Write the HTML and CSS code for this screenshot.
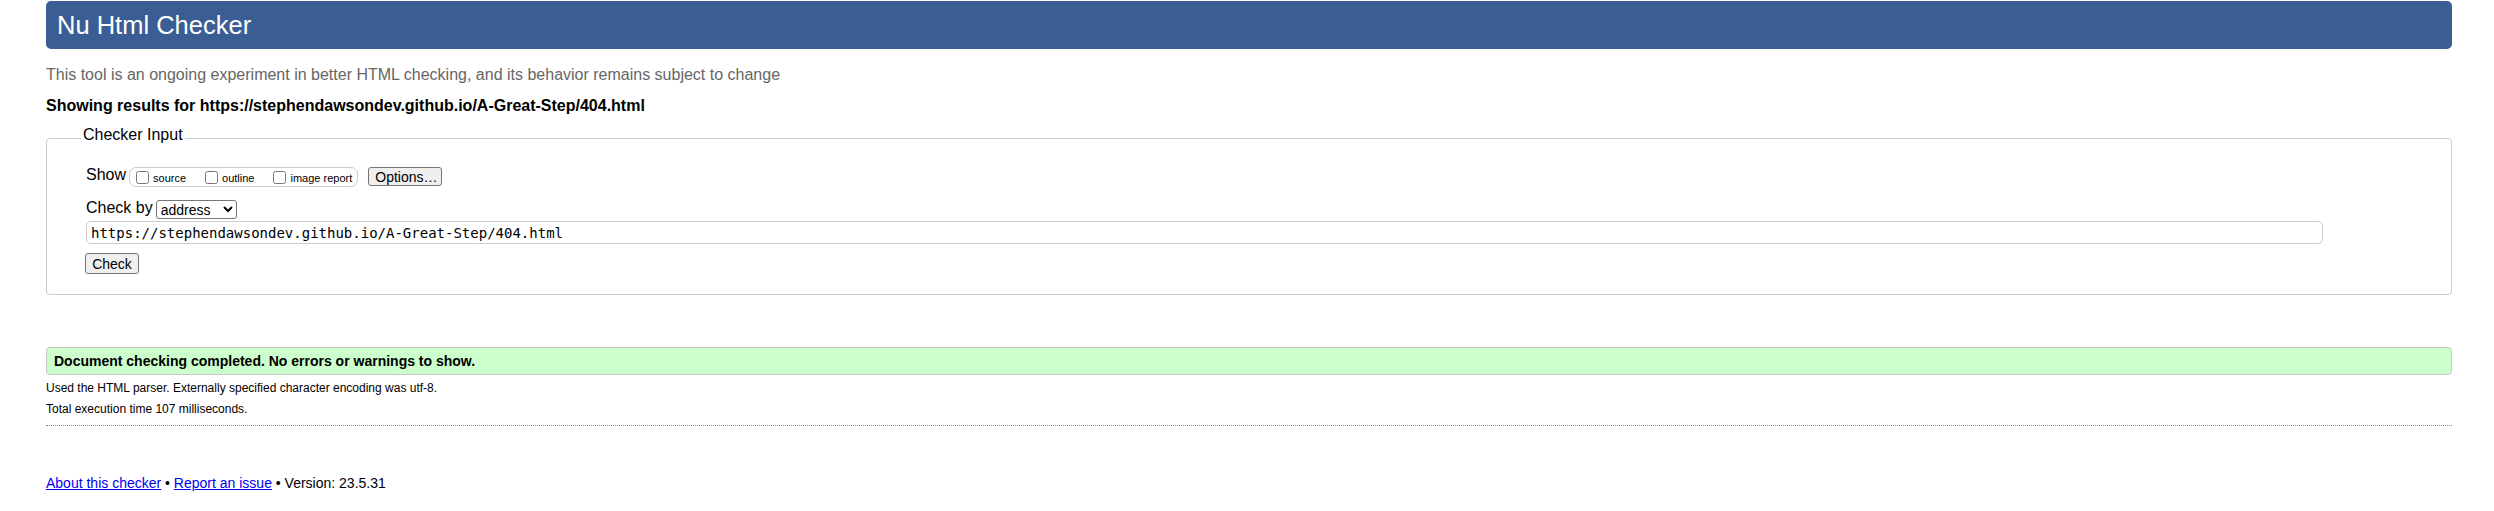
FILE: index.html
```html
<!DOCTYPE html>
<html lang="en">
<head>
<meta charset="utf-8">
<title>Nu Html Checker</title>
<link rel="stylesheet" href="styles.css">
</head>
<body>
<div class="page">
  <h1 class="title">Nu Html Checker</h1>
  <p class="intro">This tool is an ongoing experiment in better HTML checking, and its behavior remains subject to change</p>
  <p class="showing">Showing results for https://stephendawsondev.github.io/A-Great-Step/404.html</p>
  <fieldset class="checker">
    <legend class="checker-legend">Checker Input</legend>
    <div class="row show-row">
      <span class="row-label">Show</span>
      <span class="opts">
        <label class="opt"><input type="checkbox" class="cb"><span class="opt-text">source</span></label>
        <label class="opt"><input type="checkbox" class="cb"><span class="opt-text">outline</span></label>
        <label class="opt last"><input type="checkbox" class="cb"><span class="opt-text">image report</span></label>
      </span>
      <button type="button" class="btn options-btn">Options…</button>
    </div>
    <div class="row by-row">
      <span class="row-label">Check by</span>
      <select class="by-select"><option>address</option></select>
    </div>
    <input type="text" class="url-input" value="https://stephendawsondev.github.io/A-Great-Step/404.html">
    <button type="button" class="btn check-btn">Check</button>
  </fieldset>
  <div class="success"><p class="success-text">Document checking completed. No errors or warnings to show.</p></div>
  <p class="meta first">Used the HTML parser. Externally specified character encoding was utf-8.</p>
  <p class="meta">Total execution time 107 milliseconds.</p>
  <hr class="sep">
  <p class="footer"><a href="#">About this checker</a> • <a href="#">Report an issue</a> • Version: 23.5.31</p>
</div>
</body>
</html>
```
FILE: styles.css
```css
html, body {
  margin: 0;
  padding: 0;
  background: #fff;
}
body {
  font-family: "Liberation Sans", Arial, Helvetica, sans-serif;
  color: #000;
}
.page {
  padding: 1px 42px 0 46px;
}
.title {
  margin: 0;
  height: 48px;
  line-height: 48px;
  padding-left: 11px;
  background: #3a5e93;
  color: #fff;
  font-size: 25.5px;
  font-weight: normal;
  border-radius: 5px;
}
.intro {
  margin: 16px 0 0;
  font-size: 16px;
  line-height: 20px;
  color: #666;
}
.showing {
  margin: 11px 0 0;
  font-size: 16px;
  line-height: 20px;
  font-weight: bold;
}
.checker {
  margin: 10px 0 0;
  padding: 17px 20px 20px 39px;
  border: 1px solid #ccc;
  border-radius: 4px;
}
.checker-legend {
  margin-left: -5px;
  padding: 0 2px 6px;
  font-size: 16px;
  line-height: 18px;
}
.row {
  display: flex;
  align-items: flex-start;
}
.row-label {
  font-size: 16px;
  line-height: 16px;
}
.show-row {
  height: 20px;
}
.opts {
  display: flex;
  align-items: center;
  height: 18px;
  margin-left: 3px;
  padding: 0 5px 0 6px;
  border: 1px solid #ccc;
  border-radius: 7px;
}
.opt {
  display: flex;
  align-items: center;
  margin-right: 19px;
}
.opt.last {
  margin-right: 0;
}
.cb {
  margin: 0;
  width: 13px;
  height: 13px;
}
.opt-text {
  margin-left: 4px;
  font-size: 11px;
  line-height: 13px;
  position: relative;
  top: 1px;
}
.btn {
  font-family: "Liberation Sans", Arial, sans-serif;
  font-size: 14px;
  background: #efefef;
  border: 1px solid #767676;
  border-radius: 3px;
  color: #000;
  padding: 0 6px;
}
.options-btn {
  margin-left: 10px;
  width: 74px;
  height: 19px;
}
.by-row {
  margin-top: 13px;
}
.by-select {
  margin-left: 3px;
  width: 81px;
  height: 19px;
  font-family: "Liberation Sans", Arial, sans-serif;
  font-size: 14px;
  border: 1px solid #767676;
  border-radius: 3px;
  background: #fff;
  color: #000;
}
.url-input {
  display: block;
  box-sizing: border-box;
  margin: 2px 0 0;
  width: 2237px;
  height: 23px;
  padding: 0 4px;
  border: 1px solid #ccc;
  border-radius: 5px;
  font-family: "DejaVu Sans Mono", "Liberation Mono", monospace;
  font-size: 14px;
  color: #000;
}
.check-btn {
  display: block;
  margin: 9px 0 0 -1px;
  width: 54px;
  height: 21px;
}
.success {
  margin-top: 52px;
  height: 26px;
  background: #ccffcc;
  border: 1px solid #c6c6c6;
  border-radius: 4px;
}
.success-text {
  margin: 0;
  padding-left: 7px;
  font-size: 14px;
  line-height: 26px;
  font-weight: bold;
}
.meta {
  margin: 6px 0 0;
  font-size: 12px;
  line-height: 15px;
}
.meta.first {
  margin-top: 6px;
}
.sep {
  margin: 8px 0 0;
  border: 0;
  border-top: 1px dotted #888;
  height: 0;
}
.footer {
  margin: 49px 0 0;
  font-size: 14px;
  line-height: 17px;
  color: #000;
}
.footer a {
  color: #0000ee;
}
```
